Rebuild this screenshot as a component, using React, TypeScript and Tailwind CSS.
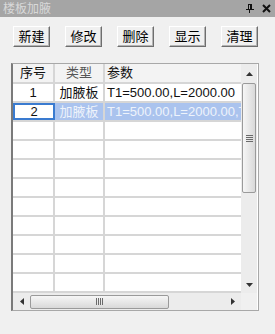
const FONT = { fontFamily: '"Liberation Sans", "Noto Sans CJK SC", sans-serif' };

const buttons = ["新建", "修改", "删除", "显示", "清理"];

const rows = [
  { no: "1", kind: "加腋板", param: "T1=500.00,L=2000.00", selected: false },
  { no: "2", kind: "加腋板", param: "T1=500.00,L=2000.00,T2", selected: true },
];

const Grip = ({ vertical }: { vertical?: boolean }) => (
  <div className={vertical ? "flex flex-col gap-[1px]" : "flex flex-row gap-[1px]"}>
    {[0, 1, 2, 3].map((i) => (
      <div
        key={i}
        className={vertical ? "w-[7px] h-[1px] bg-[#6a6a6a]" : "w-[1px] h-[7px] bg-[#6a6a6a]"}
      />
    ))}
  </div>
);

const Row = ({
  no,
  kind,
  param,
  selected,
}: {
  no?: string;
  kind?: string;
  param?: string;
  selected?: boolean;
}) => (
  <div className="flex h-[19px] border-b-2 border-[#d6d6d6] text-[13px] leading-[17px] text-[#111]">
    {selected ? (
      <div className="w-[42px] shrink-0 border-2 border-[#3a7bd0] bg-white text-center leading-[13px]">
        {no}
      </div>
    ) : (
      <div className="w-[42px] shrink-0 border-r-2 border-[#d6d6d6] bg-white text-center">{no}</div>
    )}
    <div
      className={
        selected
          ? "w-[50px] shrink-0 border-r-2 border-[#d6d6d6] bg-[#aac3ee] text-center text-[#eef3fb]"
          : "w-[50px] shrink-0 border-r-2 border-[#d6d6d6] bg-white text-center"
      }
    >
      {kind}
    </div>
    <div
      className={
        selected
          ? "min-w-0 flex-1 overflow-hidden whitespace-nowrap bg-[#aac3ee] pl-[2px] text-[#eef3fb]"
          : "min-w-0 flex-1 overflow-hidden whitespace-nowrap bg-white pl-[2px]"
      }
    >
      {param}
    </div>
  </div>
);

export default function App() {
  return (
    <div className="w-[275px] h-[334px] bg-[#f0f0f0] overflow-hidden" style={FONT}>
      {/* title bar */}
      <div className="flex h-[17px] items-center bg-[#a5a5a5] pl-[3px] pr-[4px]">
        <span className="text-[12px] text-[#d9d9d9]">楼板加腋</span>
        <div className="ml-auto flex items-center gap-[8px]">
          <svg width="8" height="9" viewBox="0 0 8 9">
            <rect x="2" y="0" width="4" height="1" fill="#111" />
            <rect x="2" y="0" width="1" height="5" fill="#111" />
            <rect x="5" y="0" width="1" height="5" fill="#111" />
            <rect x="4" y="1" width="1" height="4" fill="#111" />
            <rect x="0" y="5" width="8" height="1" fill="#111" />
            <rect x="3" y="6" width="1" height="3" fill="#111" />
          </svg>
          <svg width="9" height="9" viewBox="0 0 9 9">
            <path d="M1 1 L8 8 M8 1 L1 8" stroke="#111" strokeWidth="2" />
          </svg>
        </div>
      </div>

      {/* buttons */}
      <div className="mt-[9px] flex gap-[15px] pl-[13px]">
        {buttons.map((b) => (
          <div
            key={b}
            className="flex h-[21px] w-[37px] items-center justify-center border border-t-white border-l-white border-r-[#6e6e6e] border-b-[#6e6e6e] bg-[#f0f0f0] text-[13px] text-black shadow-[inset_-1px_-1px_0_#b4b4b4]"
          >
            {b}
          </div>
        ))}
      </div>

      {/* grid */}
      <div className="ml-[11px] mt-[16px] flex h-[248px] w-[248px] border-l-2 border-t border-r border-b border-l-[#7a7a7a] border-t-[#a8a8a8] border-r-[#a8a8a8] border-b-[#a8a8a8] bg-white">
        <div className="flex w-[228px] flex-col">
          <div className="flex h-[20px] border-b-2 border-[#d6d6d6] bg-[#f3f3f3] text-[13px] leading-[18px]">
            <div className="w-[42px] shrink-0 border-r-2 border-[#d6d6d6] text-center text-[#111]">序号</div>
            <div className="w-[50px] shrink-0 border-r-2 border-[#d6d6d6] text-center text-[#555]">类型</div>
            <div className="flex-1 pl-[2px] text-[#111]">参数</div>
          </div>
          <div className="flex-1 overflow-hidden">
            {rows.map((r) => (
              <Row key={r.no} {...r} />
            ))}
            {Array.from({ length: 9 }).map((_, i) => (
              <Row key={"e" + i} />
            ))}
          </div>
          {/* horizontal scrollbar */}
          <div className="flex h-[17px] shrink-0 items-center bg-[#ececec]">
            <div className="flex w-[17px] justify-center">
              <svg width="4" height="7" viewBox="0 0 4 7">
                <path d="M4 0 L0 3.5 L4 7 Z" fill="#333" />
              </svg>
            </div>
            <div className="flex h-[14px] w-[139px] items-center justify-center rounded-[2px] border border-[#9a9a9a] bg-gradient-to-b from-[#f6f6f6] to-[#d9d9d9]">
              <Grip />
            </div>
            <div className="ml-auto flex w-[17px] justify-center">
              <svg width="4" height="7" viewBox="0 0 4 7">
                <path d="M0 0 L4 3.5 L0 7 Z" fill="#333" />
              </svg>
            </div>
          </div>
        </div>

        {/* vertical scrollbar */}
        <div className="flex w-[16px] flex-col bg-[#ececec]">
          <div className="flex h-[19px] items-center justify-center">
            <svg width="7" height="4" viewBox="0 0 7 4">
              <path d="M0 4 L3.5 0 L7 4 Z" fill="#333" />
            </svg>
          </div>
          <div className="ml-[1px] flex h-[110px] w-[14px] items-center justify-center rounded-[2px] border border-[#9a9a9a] bg-gradient-to-r from-[#f6f6f6] to-[#d9d9d9]">
            <Grip vertical />
          </div>
          <div className="mt-auto flex h-[17px] items-center justify-center">
            <svg width="7" height="4" viewBox="0 0 7 4">
              <path d="M0 0 L3.5 4 L7 0 Z" fill="#333" />
            </svg>
          </div>
          <div className="h-[17px] bg-[#f0f0f0]" />
        </div>
      </div>
    </div>
  );
}
